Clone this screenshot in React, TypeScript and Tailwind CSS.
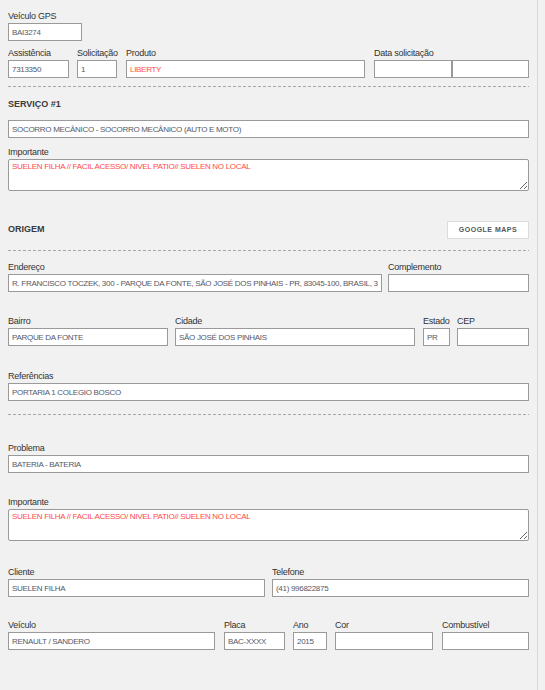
import React from "react";

const labelCls =
  "block h-[13px] leading-[13px] text-[9px] tracking-[-0.25px] text-[#333] whitespace-nowrap";
const inputCls =
  "block w-full h-[18px] bg-white border border-[#9a9a9a] pl-[3px] pr-[2px] text-[8px] tracking-[-0.3px] text-[#535868] outline-none uppercase";

function Field({
  label,
  value = "",
  className = "",
  red = false,
}: {
  label?: string;
  value?: string;
  className?: string;
  red?: boolean;
}) {
  return (
    <div className={"flex flex-col " + className}>
      {label !== undefined && <span className={labelCls}>{label}</span>}
      <input
        readOnly
        value={value}
        className={inputCls + (red ? " !text-[#ff4a4a]" : "")}
      />
    </div>
  );
}

function Area({ label, value }: { label: string; value: string }) {
  return (
    <div className="flex flex-col">
      <span className={labelCls}>{label}</span>
      <textarea
        readOnly
        value={value}
        className="block w-full h-[32px] bg-white border border-[#9a9a9a] rounded-[2px] px-[3px] pt-[1px] text-[8px] tracking-[-0.3px] leading-[12px] text-[#ff4a4a] outline-none resize-y"
      />
    </div>
  );
}

function Dashed({ className = "" }: { className?: string }) {
  return (
    <div
      className={
        "h-px w-full bg-[linear-gradient(to_right,#a8a8a8_3px,transparent_3px)] bg-[length:5px_1px] bg-repeat-x " +
        className
      }
    />
  );
}

export default function App() {
  return (
    <div
      className="min-h-[690px] w-[545px] bg-[#f1f1f1]"
      style={{ fontFamily: '"Liberation Sans", Arial, sans-serif' }}
    >
      <div className="w-[538px] min-h-[690px] border-r border-[#d6d6d6] pl-[8px] pr-[8px] pt-[10px]">
        {/* Row 1 */}
        <Field label="Veículo GPS" value="BAI3274" className="w-[74px]" />

        {/* Row 2 */}
        <div className="flex mt-[6px]">
          <Field label="Assistência" value="7313350" className="w-[61px]" />
          <Field label="Solicitação" value="1" className="w-[40px] ml-[8px]" />
          <Field label="Produto" value="LIBERTY" red className="flex-1 ml-[9px]" />
          <div className="flex flex-col w-[155px] ml-[9px]">
            <span className={labelCls}>Data solicitação</span>
            <div className="flex">
              <input readOnly value="" className={inputCls + " !w-[78px]"} />
              <input readOnly value="" className={inputCls + " !w-[77px]"} />
            </div>
          </div>
        </div>

        <Dashed className="mt-[8px]" />

        {/* Serviço */}
        <div className="mt-[10px] h-[14px] leading-[14px] text-[9px] font-bold text-[#3a3a3a]">
          SERVIÇO #1
        </div>
        <div className="mt-[9px]">
          <Field value="SOCORRO MECÂNICO - SOCORRO MECÂNICO (AUTO E MOTO)" />
        </div>
        <div className="mt-[8px]">
          <Area
            label="Importante"
            value="SUELEN FILHA // FACIL ACESSO/ NIVEL PATIO// SUELEN NO LOCAL"
          />
        </div>

        {/* Origem */}
        <div className="mt-[30px] flex items-center justify-between h-[18px]">
          <span className="text-[9px] font-bold text-[#3a3a3a]">ORIGEM</span>
          <button className="w-[82px] h-[18px] bg-white border border-[#dcdcdc] text-[7px] font-bold tracking-[0.5px] text-[#555]">
            GOOGLE MAPS
          </button>
        </div>

        <Dashed className="mt-[11px]" />

        <div className="flex mt-[10px]">
          <Field
            label="Endereço"
            value="R. FRANCISCO TOCZEK, 300 - PARQUE DA FONTE, SÃO JOSÉ DOS PINHAIS - PR, 83045-100, BRASIL, 3"
            className="flex-1"
          />
          <Field label="Complemento" className="w-[141px] ml-[6px]" />
        </div>

        <div className="flex mt-[23px]">
          <Field label="Bairro" value="PARQUE DA FONTE" className="w-[160px]" />
          <Field label="Cidade" value="SÃO JOSÉ DOS PINHAIS" className="w-[240px] ml-[7px]" />
          <Field label="Estado" value="PR" className="w-[27px] ml-[8px]" />
          <Field label="CEP" className="w-[72px] ml-[7px]" />
        </div>

        <div className="mt-[24px]">
          <Field label="Referências" value="PORTARIA 1 COLEGIO BOSCO" />
        </div>

        <Dashed className="mt-[13px]" />

        <div className="mt-[27px]">
          <Field label="Problema" value="BATERIA - BATERIA" />
        </div>

        <div className="mt-[23px]">
          <Area
            label="Importante"
            value="SUELEN FILHA // FACIL ACESSO/ NIVEL PATIO// SUELEN NO LOCAL"
          />
        </div>

        <div className="flex mt-[25px]">
          <Field label="Cliente" value="SUELEN FILHA" className="w-[257px]" />
          <Field label="Telefone" value="(41) 996822875" className="w-[257px] ml-[7px]" />
        </div>

        <div className="flex mt-[22px]">
          <Field label="Veículo" value="RENAULT / SANDERO" className="w-[207px]" />
          <Field label="Placa" value="BAC-XXXX" className="w-[61px] ml-[9px]" />
          <Field label="Ano" value="2015" className="w-[34px] ml-[8px]" />
          <Field label="Cor" className="w-[98px] ml-[8px]" />
          <Field label="Combustível" className="w-[87px] ml-[9px]" />
        </div>
      </div>
    </div>
  );
}
